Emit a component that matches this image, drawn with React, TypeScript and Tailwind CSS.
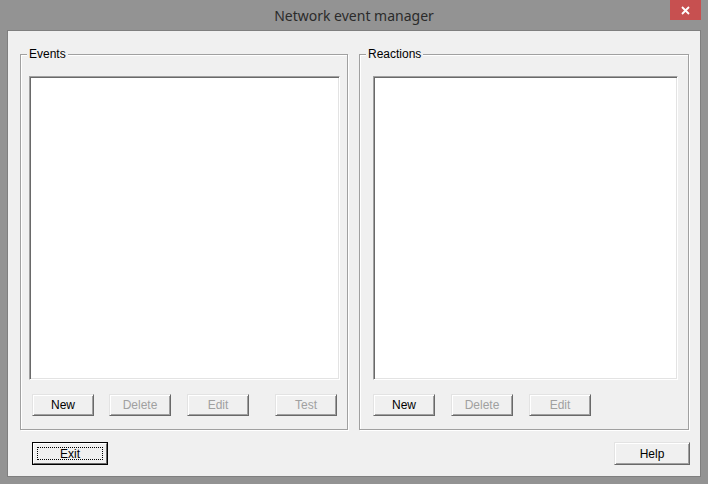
import { FC, ReactNode } from 'react';

const font = { fontFamily: '"Liberation Sans", Arial, sans-serif' };

const Button: FC<{ label: string; disabled?: boolean; className?: string }> = ({
  label,
  disabled,
  className,
}) => (
  <div
    className={`flex h-[22px] w-[62px] items-center justify-center border border-t-[#e3e3e3] border-l-[#e3e3e3] border-r-[#696969] border-b-[#696969] bg-[#f0f0f0] text-[12px] shadow-[inset_1px_1px_0_#ffffff,inset_-1px_-1px_0_#a0a0a0] ${
      disabled ? 'text-[#a0a0a0]' : 'text-black'
    } ${className ?? ''}`}
  >
    {label}
  </div>
);

const GroupBox: FC<{ title: string; className?: string; children: ReactNode }> = ({
  title,
  className,
  children,
}) => (
  <div
    className={`relative h-[376px] border border-[#a0a0a0] shadow-[inset_1px_1px_0_#ffffff,1px_1px_0_#ffffff] ${
      className ?? ''
    }`}
  >
    <span className="absolute left-[6px] top-[-8px] bg-[#f0f0f0] px-[2px] text-[12px] leading-[14px] text-black">
      {title}
    </span>
    {children}
  </div>
);

const ListBox: FC<{ className?: string }> = ({ className }) => (
  <div
    className={`h-[304px] border border-t-[#a0a0a0] border-l-[#a0a0a0] border-r-[#ffffff] border-b-[#ffffff] bg-white shadow-[inset_1px_1px_0_#696969,inset_-1px_-1px_0_#e3e3e3] ${
      className ?? ''
    }`}
  />
);

const App: FC = () => {
  return (
    <div className="flex h-[484px] w-[708px] flex-col bg-[#939393]" style={font}>
      <div className="relative flex h-[30px] items-center justify-center">
        <span
          className="text-[14px] text-[#2b2b2b]"
          style={{ fontFamily: '"Noto Sans", "Open Sans", sans-serif' }}
        >
          Network event manager
        </span>
        <div className="absolute right-[7px] top-0 flex h-[20px] w-[31px] items-center justify-center bg-[#c75050]">
          <svg width="9" height="9" viewBox="0 0 9 9">
            <path d="M1 1L8 8M8 1L1 8" stroke="#ffffff" strokeWidth="1.8" />
          </svg>
        </div>
      </div>

      <div className="mx-[7px] h-[447px] border border-[#7f7f7f] bg-[#f0f0f0]">
        <div className="flex flex-col pl-[12px] pr-[11px] pt-[23px]">
          <div className="flex gap-[11px]">
            <GroupBox title="Events" className="w-[328px]">
              <div className="flex flex-col pl-[8px] pt-[21px]">
                <ListBox className="w-[311px]" />
                <div className="mt-[14px] flex">
                  <Button label="New" className="ml-[3px]" />
                  <Button label="Delete" disabled className="ml-[15px]" />
                  <Button label="Edit" disabled className="ml-[16px]" />
                  <Button label="Test" disabled className="ml-[26px]" />
                </div>
              </div>
            </GroupBox>
            <GroupBox title="Reactions" className="w-[330px]">
              <div className="flex flex-col pl-[13px] pt-[21px]">
                <ListBox className="w-[305px]" />
                <div className="mt-[14px] flex">
                  <Button label="New" />
                  <Button label="Delete" disabled className="ml-[16px]" />
                  <Button label="Edit" disabled className="ml-[16px]" />
                </div>
              </div>
            </GroupBox>
          </div>

          <div className="mt-[12px] flex justify-between">
            <div className="ml-[12px] border border-black">
              <div className="relative flex h-[21px] w-[74px] items-center justify-center border border-t-[#ffffff] border-l-[#ffffff] border-r-[#696969] border-b-[#696969] bg-[#f0f0f0] text-[12px] text-black">
                <div className="absolute inset-[3px] border border-dotted border-black" />
                Exit
              </div>
            </div>
            <Button label="Help" className="mr-[-1px] h-[23px] w-[76px]" />
          </div>
        </div>
      </div>
    </div>
  );
};

export default App;
